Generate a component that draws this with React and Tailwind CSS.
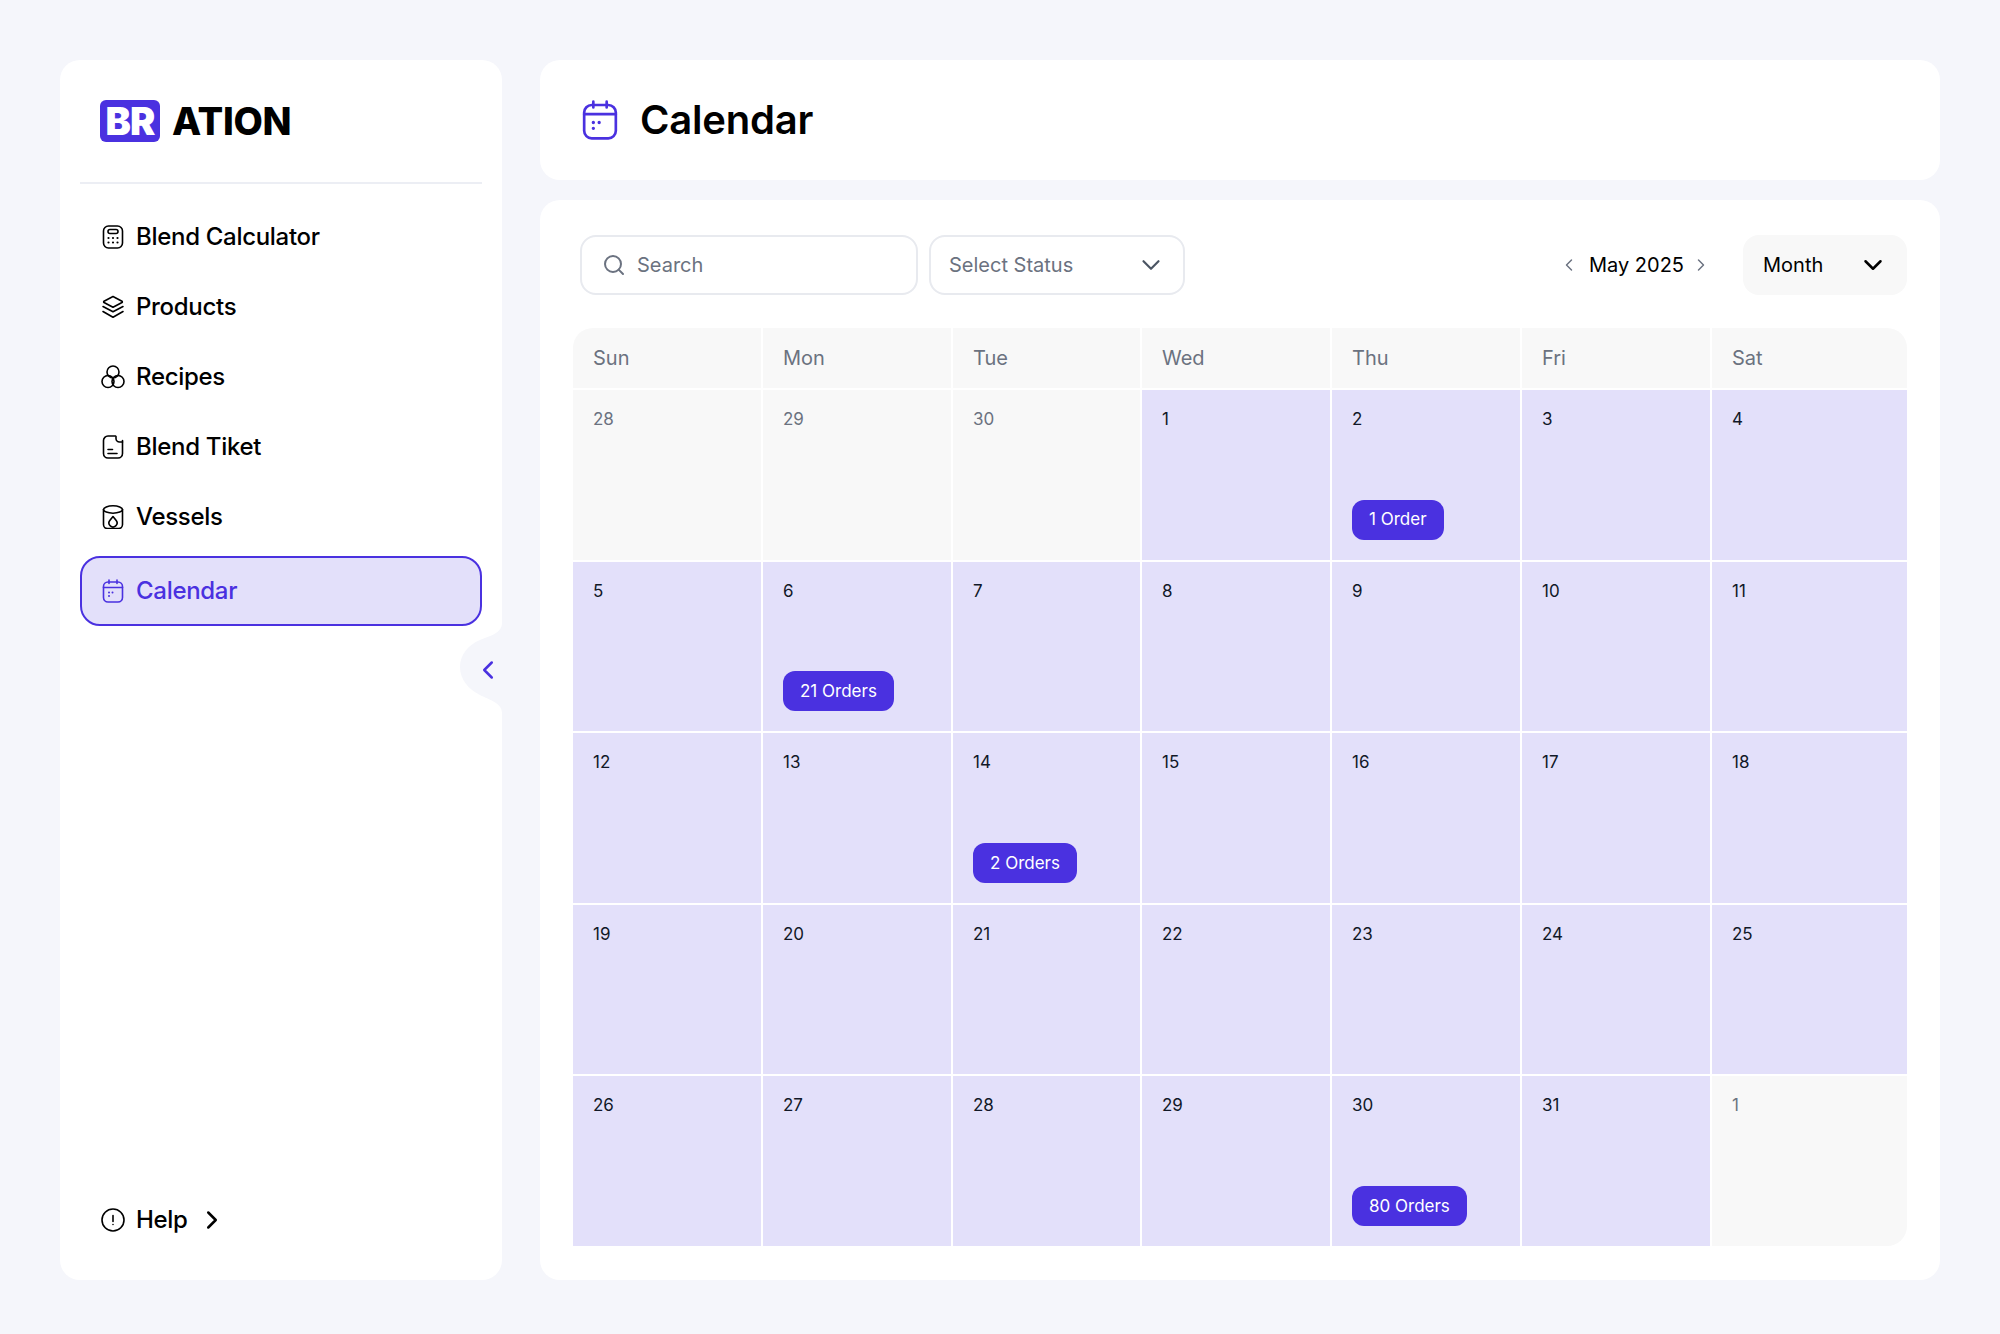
import { ChevronDown, ChevronLeft, ChevronRight, Search } from 'lucide-react'

const iconProps = {
  width: 24,
  height: 24,
  viewBox: '0 0 24 24',
  fill: 'none',
  stroke: 'currentColor',
  strokeWidth: 1.6,
  strokeLinecap: 'round',
  strokeLinejoin: 'round',
}

function CalculatorIcon() {
  return (
    <svg {...iconProps}>
      <rect x="2.500" y="1" width="19" height="22" rx="5" />
      <rect x="7" y="4.500" width="10" height="4" rx="2" />
      <path d="M7.500 13h.01M12 13h.01M16.500 13h.01M7.500 17.500h.01M12 17.500h.01M16.500 17.500h.01" strokeWidth="2.200" />
    </svg>
  )
}

function LayersIcon() {
  return (
    <svg {...iconProps}>
      <path d="M12 1.500l9 4.800a.7.700 0 0 1 0 1.200l-9 4.800-9-4.800a.7.700 0 0 1 0-1.200z" />
      <path d="M2 11.500l10 5.300 10-5.300" />
      <path d="M2 16.500l10 5.800 10-5.800" />
    </svg>
  )
}

function RecipesIcon() {
  return (
    <svg {...iconProps}>
      <circle cx="12" cy="7" r="6" />
      <circle cx="7" cy="16.500" r="6" />
      <circle cx="17" cy="16.500" r="6" />
    </svg>
  )
}

function TicketIcon() {
  return (
    <svg {...iconProps}>
      <path d="M14.500 1H7a4.500 4.500 0 0 0-4.500 4.500v13A4.500 4.500 0 0 0 7 23h10a4.500 4.500 0 0 0 4.500-4.500v-13" />
      <path d="M15 1.500v2A3.500 3.500 0 0 0 18.500 7H21.500" />
      <path d="M7 14.500h4.500M7 18.500h9" />
    </svg>
  )
}

function VesselIcon() {
  return (
    <svg {...iconProps}>
      <ellipse cx="12" cy="4.500" rx="9.500" ry="3.700" />
      <path d="M2.500 4.500v15a4 4 0 0 0 4 4h11a4 4 0 0 0 4-4v-15" />
      <path d="M12 11.500l3.200 4a4 4 0 1 1-6.400 0z" />
    </svg>
  )
}

function CalendarIcon({ size = 24 }) {
  return (
    <svg {...iconProps} width={size} height={size}>
      <rect x="2.500" y="3" width="19" height="20" rx="4.500" />
      <path d="M8 1v3.500M16 1v3.500M2.500 8.500h19" />
      <path d="M8 13.500h.01M11.500 13.500h.01M8 17h.01" strokeWidth="2" />
    </svg>
  )
}

function HelpIcon() {
  return (
    <svg {...iconProps}>
      <circle cx="12" cy="12" r="11" />
      <path d="M12 7.500v6M12 16.500h.01" />
    </svg>
  )
}

const navItems = [
  { label: 'Blend Calculator', icon: CalculatorIcon },
  { label: 'Products', icon: LayersIcon },
  { label: 'Recipes', icon: RecipesIcon },
  { label: 'Blend Tiket', icon: TicketIcon },
  { label: 'Vessels', icon: VesselIcon },
]

const weekDays = ['Sun', 'Mon', 'Tue', 'Wed', 'Thu', 'Fri', 'Sat']

const orders = { 2: '1 Order', 6: '21 Orders', 14: '2 Orders', 30: '80 Orders' }

const days = [
  ...[28, 29, 30].map((day) => ({ day, muted: true })),
  ...Array.from({ length: 31 }, (_, i) => ({ day: i + 1, order: orders[i + 1] })),
  { day: 1, muted: true },
]

function Sidebar() {
  return (
    <aside className="relative flex w-[442px] shrink-0 flex-col rounded-[20px] bg-white px-5">
      <div className="flex h-[124px] items-center gap-3 border-b-2 border-[#eceef4] pl-5">
        <span className="flex h-[42px] w-[60px] items-center justify-center rounded-[6px] bg-[#4a31e0] text-[38px] font-black tracking-[-1px] text-white">
          BR
        </span>
        <span className="text-[38px] font-extrabold tracking-[-0.3px] text-black">ATION</span>
      </div>

      <nav className="mt-[18px] flex flex-col">
        {navItems.map((item) => (
          <a key={item.label} className="flex h-[70px] items-center gap-[11px] pl-[21px] text-2xl font-medium tracking-[-0.3px] text-black">
            <item.icon />
            {item.label}
          </a>
        ))}
        <a className="mt-1 flex h-[70px] items-center gap-[11px] rounded-[20px] border-2 border-[#4a31e0] bg-[#e3e0fa] pl-[19px] text-2xl font-medium tracking-[-0.3px] text-[#4a31e0]">
          <CalendarIcon />
          Calendar
        </a>
      </nav>

      <a className="mt-auto mb-[25px] flex h-[70px] items-center gap-[11px] pl-[21px] text-2xl font-medium tracking-[-0.3px] text-black">
        <HelpIcon />
        Help
        <ChevronRight size={30} strokeWidth={2} className="-ml-[2px]" />
      </a>

      <svg className="absolute top-[563px] right-0" width="42" height="90" viewBox="0 0 42 90" fill="#f5f6fb">
        <path d="M42 0C42 10 30 13 20 17C8 22 0 32 0 44C0 56 8 66 20 72C30 77 42 80 42 90Z" />
      </svg>
      <ChevronLeft size={30} strokeWidth={2} className="absolute top-[595px] right-[-1px] text-[#4a31e0]" />
    </aside>
  )
}

function Toolbar() {
  return (
    <div className="flex items-center pl-[7px]">
      <div className="flex h-[60px] w-[338px] items-center gap-[11px] rounded-2xl border-2 border-[#e8eaef] pl-[20px] text-xl text-[#6b7280]">
        <Search size={24} strokeWidth={2} />
        Search
      </div>
      <div className="ml-[11px] flex h-[60px] w-[256px] items-center justify-between rounded-2xl border-2 border-[#e8eaef] pr-[17px] pl-[18px] text-xl text-[#6b7280]">
        Select Status
        <ChevronDown size={30} strokeWidth={1.75} className="text-[#4b5563]" />
      </div>

      <div className="ml-auto flex items-center text-xl text-black">
        <ChevronLeft size={20} strokeWidth={1.75} className="text-[#6b7280]" />
        <span className="mr-[7px] ml-[10px]">May 2025</span>
        <ChevronRight size={20} strokeWidth={1.75} className="text-[#6b7280]" />
      </div>
      <div className="ml-[32px] flex h-[60px] w-[164px] items-center justify-between rounded-2xl bg-[#f8f8f8] pr-[19px] pl-[20px] text-xl text-black">
        Month
        <ChevronDown size={30} strokeWidth={2} />
      </div>
    </div>
  )
}

function CalendarGrid() {
  return (
    <div className="mt-[33px] grid grid-cols-[188px_188px_187px_188px_188px_188px_1fr] gap-[2px]">
      {weekDays.map((name, i) => (
        <div
          key={name}
          className={`flex h-[60px] items-center bg-[#f8f8f8] pl-5 text-xl text-[#6b7280] ${i === 0 ? 'rounded-tl-[20px]' : ''} ${i === 6 ? 'rounded-tr-[20px]' : ''}`}
        >
          {name}
        </div>
      ))}
      {days.map(({ day, muted, order }, i) => (
        <div
          key={i}
          className={`flex h-[169.6px] flex-col justify-between pt-[17px] pr-4 pb-5 pl-5 text-[17px] ${muted ? 'bg-[#f8f8f8] text-[#6b7280]' : 'bg-[#e3e0fa] text-[#111827]'} ${i === 34 ? 'rounded-br-[20px]' : ''}`}
        >
          <span>{day}</span>
          {order && (
            <span className="flex h-10 w-fit items-center rounded-xl bg-[#4a31e0] px-[17px] pt-px text-[17px] text-white">
              {order}
            </span>
          )}
        </div>
      ))}
    </div>
  )
}

export default function App() {
  return (
    <div className="flex h-[1334px] gap-[38px] bg-[#f5f6fb] px-[60px] pt-[60px] pb-[54px] font-['Inter',sans-serif]">
      <Sidebar />
      <main className="flex flex-1 flex-col gap-5">
        <header className="flex h-[120px] items-center gap-5 rounded-[20px] bg-white pl-10">
          <span className="text-[#4a31e0]">
            <CalendarIcon size={40} />
          </span>
          <h1 className="text-[40px] font-semibold tracking-[-0.2px] text-black">Calendar</h1>
        </header>
        <section className="flex-1 rounded-[20px] bg-white px-[33px] pt-[35px]">
          <Toolbar />
          <CalendarGrid />
        </section>
      </main>
    </div>
  )
}
